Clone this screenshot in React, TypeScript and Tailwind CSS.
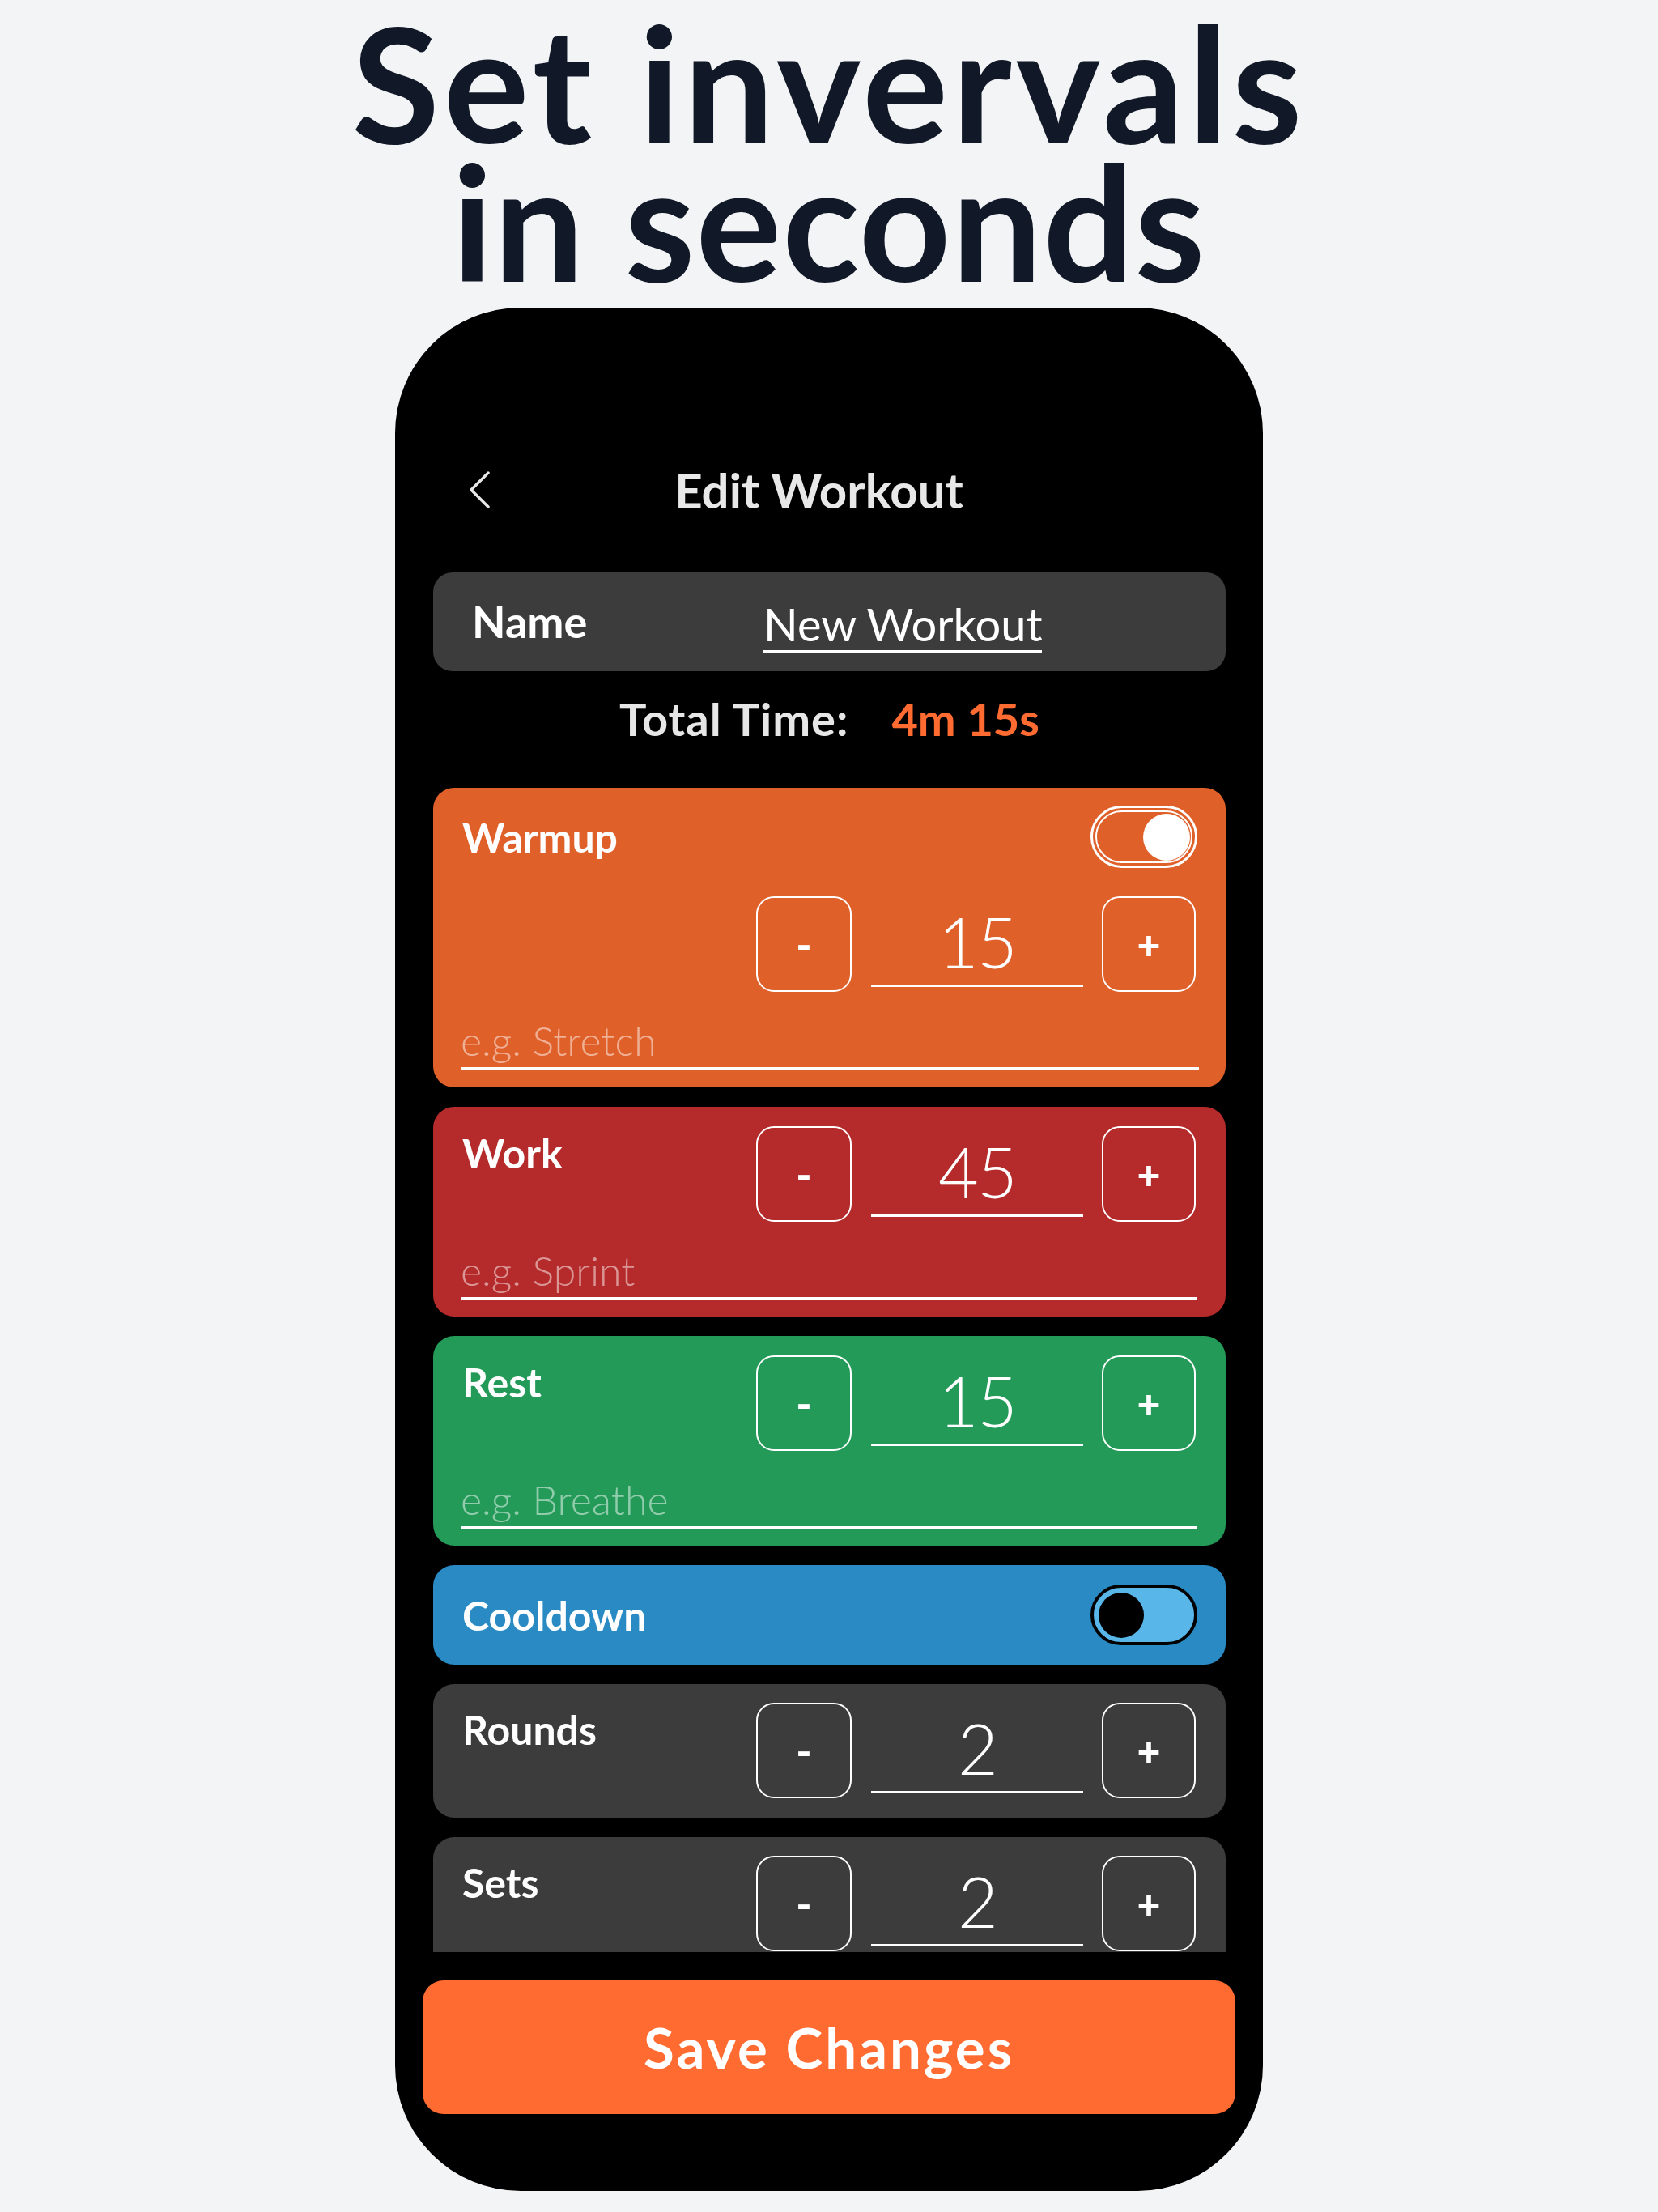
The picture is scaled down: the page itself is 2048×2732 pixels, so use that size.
import React from "react";

function Stepper({ value }: { value: string }) {
  return (
    <div className="flex items-start">
      <button className="w-[118px] h-[118px] rounded-[22px] border-2 border-white flex items-center justify-center text-white text-[52px] font-black leading-none">
        -
      </button>
      <div className="ml-[24px] w-[262px] h-[112px] border-b-[3px] border-white flex items-end justify-center pb-[10px] text-white text-[86px] font-light leading-[86px] tracking-[-2px]">
        {value}
      </div>
      <button className="ml-[23px] w-[116px] h-[118px] rounded-[22px] border-2 border-white flex items-center justify-center text-white text-[50px] font-black leading-none">
        +
      </button>
    </div>
  );
}

function Placeholder({ text }: { text: string }) {
  return (
    <div className="mt-[35px] -ml-[2px] mr-[-2px] border-b-[3px] border-white pb-[8px] text-[50px] leading-[50px] font-light text-white/50">
      {text}
    </div>
  );
}

function ToggleOn() {
  return (
    <div className="w-[132px] h-[77px] rounded-full border-[3px] border-white p-[3px] flex">
      <div className="flex-1 rounded-full border-2 border-white flex items-center justify-end pr-[1px]">
        <div className="w-[58px] h-[58px] rounded-full bg-white" />
      </div>
    </div>
  );
}

function ToggleOff() {
  return (
    <div className="w-[132px] h-[75px] rounded-full border-[4px] border-black bg-[#58b6e9] flex items-center pl-[6px]">
      <div className="w-[56px] h-[56px] rounded-full bg-black" />
    </div>
  );
}

function StepCard({ label, value, placeholder, color }: { label: string; value: string; placeholder: string; color: string }) {
  return (
    <div className={`h-[259px] shrink-0 rounded-[26px] ${color} pt-[24px] pl-[36px] pr-[37px] flex flex-col`}>
      <div className="flex justify-between items-start">
        <span className="mt-[8px] text-[50px] leading-[50px] font-bold text-white">{label}</span>
        <Stepper value={value} />
      </div>
      <Placeholder text={placeholder} />
    </div>
  );
}

function CountCard({ label, value }: { label: string; value: string }) {
  return (
    <div className="h-[165px] shrink-0 rounded-[26px] bg-[#3c3c3c] pt-[23px] pl-[36px] pr-[37px]">
      <div className="flex justify-between items-start">
        <span className="mt-[8px] text-[50px] leading-[50px] font-bold text-white">{label}</span>
        <Stepper value={value} />
      </div>
    </div>
  );
}

export default function App() {
  return (
    <div className="h-[2732px] bg-[#f3f4f6] flex flex-col items-center font-[Lato,'Noto_Sans',sans-serif] overflow-hidden">
      <h1 className="pt-[15px] text-[198px] leading-[171px] font-bold text-[#111827] text-center">
        <span className="block tracking-[5px]">Set invervals</span>
        <span className="block tracking-[1px]">in seconds</span>
      </h1>
      <div className="mt-[23px] w-[1072px] h-[2326px] shrink-0 bg-black rounded-[155px] pt-[195px] flex flex-col">
        <div className="pl-[47px] pr-[46px]">
          <div className="grid grid-cols-[1fr_auto_1fr] items-center h-[60px]">
            <div className="ml-[44px]">
              <svg width="26" height="46" viewBox="0 0 26 46" fill="none">
                <path d="M24 2 L3 23 L24 44" stroke="#e8e8e8" strokeWidth="3.5" strokeLinecap="round" strokeLinejoin="round" />
              </svg>
            </div>
            <div className="pr-[26px] text-[60px] leading-[60px] font-bold text-[#e8e8e8]">Edit Workout</div>
            <div />
          </div>

          <div className="mt-[72px] h-[1704px] overflow-hidden flex flex-col">
            <div className="h-[122px] shrink-0 rounded-[24px] bg-[#3c3c3c] pl-[48px] flex items-center">
              <span className="w-[360px] text-[54px] leading-[54px] font-bold text-white">Name</span>
              <span className="pt-[12px] pb-[4px] border-b-[3px] border-white text-[56px] leading-[56px] font-normal text-white">
                New Workout
              </span>
            </div>

            <div className="mt-[31px] h-[56px] shrink-0 flex justify-center gap-[53px] text-[56px] leading-[56px] font-bold">
              <span className="text-[#e6e6e6] tracking-[1px]">Total Time:</span>
              <span className="text-[#ff6b30]">4m 15s</span>
            </div>

            <div className="mt-[57px] flex flex-col gap-[24px]">
              <div className="h-[370px] shrink-0 rounded-[26px] bg-[#e0602a] pt-[22px] pl-[36px] pr-[35px] flex flex-col">
                <div className="flex justify-between items-center h-[77px]">
                  <span className="text-[50px] leading-[50px] font-bold text-white">Warmup</span>
                  <ToggleOn />
                </div>
                <div className="mt-[35px] flex justify-end pr-[2px]">
                  <Stepper value="15" />
                </div>
                <Placeholder text="e.g. Stretch" />
              </div>

              <StepCard label="Work" value="45" placeholder="e.g. Sprint" color="bg-[#b52a2a]" />
              <StepCard label="Rest" value="15" placeholder="e.g. Breathe" color="bg-[#239a58]" />

              <div className="h-[123px] shrink-0 rounded-[26px] bg-[#2a8bc4] pl-[36px] pr-[35px] flex items-center justify-between">
                <span className="text-[50px] leading-[50px] font-bold text-white">Cooldown</span>
                <ToggleOff />
              </div>

              <CountCard label="Rounds" value="2" />
              <CountCard label="Sets" value="2" />
            </div>
          </div>
        </div>

        <div className="mt-[35px] px-[34px]">
          <button className="w-full h-[165px] rounded-[26px] bg-[#ff6b30] text-white text-[69px] leading-[69px] font-bold tracking-[3px]">
            Save Changes
          </button>
        </div>
      </div>
    </div>
  );
}
